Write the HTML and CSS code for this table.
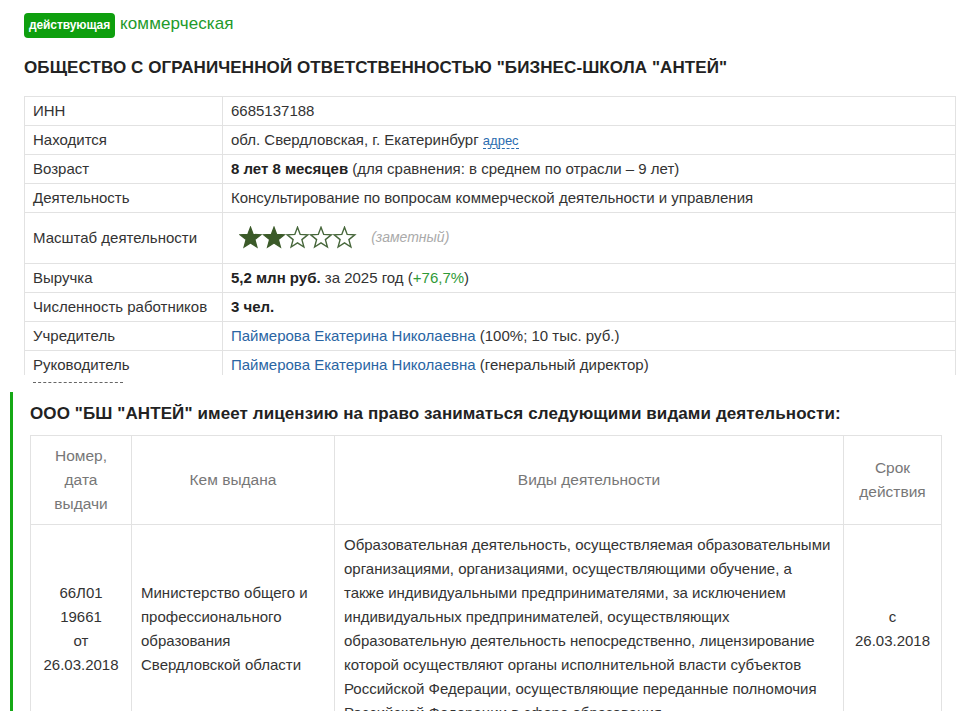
FILE: index.html
```html
<!DOCTYPE html>
<html lang="ru">
<head>
<meta charset="utf-8">
<link rel="stylesheet" href="styles.css">
</head>
<body>
<div class="page">
  <div class="company">
    <div class="status">
      <span class="badge">действующая</span>
      <span class="kind">коммерческая</span>
    </div>
    <h1 class="title">ОБЩЕСТВО С ОГРАНИЧЕННОЙ ОТВЕТСТВЕННОСТЬЮ "БИЗНЕС-ШКОЛА "АНТЕЙ"</h1>
    <table class="info">
      <tr><td class="lbl">ИНН</td><td>6685137188</td></tr>
      <tr><td class="lbl">Находится</td><td>обл. Свердловская, г. Екатеринбург <a class="addr">адрес</a></td></tr>
      <tr><td class="lbl">Возраст</td><td><b>8 лет 8 месяцев</b> (для сравнения: в среднем по отрасли – 9 лет)</td></tr>
      <tr><td class="lbl">Деятельность</td><td>Консультирование по вопросам коммерческой деятельности и управления</td></tr>
      <tr class="scale"><td class="lbl">Масштаб деятельности</td><td>
        <span class="stars">
          <svg width="120" height="23" viewBox="0 0 120 23">
            <defs>
              <path id="st" d="M11.5 1.3 L14.2 8.4 L21.8 8.8 L15.9 13.6 L17.9 21 L11.5 16.9 L5.1 21 L7.1 13.6 L1.2 8.8 L8.8 8.4 Z"/>
            </defs>
            <use href="#st" x="0" fill="#3b5a29" stroke="#3b5a29" stroke-width="1.3"/>
            <use href="#st" x="23.5" fill="#3b5a29" stroke="#3b5a29" stroke-width="1.3"/>
            <use href="#st" x="47" fill="#fff" stroke="#46663a" stroke-width="1.4"/>
            <use href="#st" x="70.5" fill="#fff" stroke="#46663a" stroke-width="1.4"/>
            <use href="#st" x="94" fill="#fff" stroke="#46663a" stroke-width="1.4"/>
          </svg>
        </span>
        <span class="note">(заметный)</span>
      </td></tr>
      <tr><td class="lbl">Выручка</td><td><b>5,2 млн руб.</b> за 2025 год (<span class="up">+76,7%</span>)</td></tr>
      <tr><td class="lbl">Численность работников</td><td><b>3 чел.</b></td></tr>
      <tr><td class="lbl">Учредитель</td><td><a class="person">Паймерова Екатерина Николаевна</a> (100%; 10 тыс. руб.)</td></tr>
      <tr class="last"><td class="lbl"><span class="dashed">Руководитель</span></td><td><a class="person">Паймерова Екатерина Николаевна</a> (генеральный директор)</td></tr>
    </table>
  </div>

  <section class="license">
    <h2 class="lic-title">ООО "БШ "АНТЕЙ" имеет лицензию на право заниматься следующими видами деятельности:</h2>
    <table class="lic">
      <colgroup>
        <col class="c1"><col class="c2"><col class="c3"><col class="c4">
      </colgroup>
      <tr class="head">
        <th>Номер,<br>дата<br>выдачи</th>
        <th>Кем выдана</th>
        <th>Виды деятельности</th>
        <th>Срок<br>действия</th>
      </tr>
      <tr>
        <td class="center">66Л01<br>19661<br>от<br>26.03.2018</td>
        <td>Министерство общего и профессионального образования Свердловской области</td>
        <td class="top">Образовательная деятельность, осуществляемая образовательными организациями, организациями, осуществляющими обучение, а также индивидуальными предпринимателями, за исключением индивидуальных предпринимателей, осуществляющих образовательную деятельность непосредственно, лицензирование которой осуществляют органы исполнительной власти субъектов Российской Федерации, осуществляющие переданные полномочия Российской Федерации в сфере образования.</td>
        <td class="center">с<br>26.03.2018</td>
      </tr>
    </table>
  </section>
</div>
</body>
</html>
```

FILE: styles.css
```css
html, body {
  margin: 0;
  padding: 0;
  background: #fff;
}
body {
  font-family: "Liberation Sans", Arial, sans-serif;
  color: #333;
  font-size: 15px;
}
.page {
  padding: 12px 10px 0 10px;
}
.company {
  padding-left: 14px;
  padding-right: 8px;
}
.status {
  display: flex;
  align-items: center;
  gap: 5px;
  height: 26px;
}
.badge {
  background: #0e9f0e;
  color: #fff;
  font-size: 12px;
  font-weight: bold;
  letter-spacing: -0.1px;
  border-radius: 4px;
  padding: 5px 5px;
  line-height: 15px;
}
.kind {
  color: #229a2a;
  font-size: 17px;
  letter-spacing: 0.1px;
  position: relative;
  top: -1px;
}
.title {
  font-size: 17px;
  font-weight: bold;
  color: #222;
  margin: 20px 0 18px 0;
  line-height: 20px;
  letter-spacing: 0.1px;
}
.info {
  border-collapse: collapse;
  width: 932px;
}
.info td {
  border: 1px solid #e2e2e2;
  padding: 0 8px;
  height: 28px;
  line-height: 20px;
  vertical-align: middle;
}
.info td.lbl {
  width: 181px;
}
.info tr.scale td {
  height: 50px;
}
.info tr.last td {
  border-bottom: none;
  height: 18px;
  vertical-align: top;
  padding-top: 4px;
  padding-bottom: 0;
}
.dashed {
  display: inline-block;
  line-height: 20px;
  border-bottom: 1px dashed #666;
  padding-bottom: 7px;
  margin-bottom: -8px;
  width: 90px;
  white-space: nowrap;
}
b {
  color: #222;
}
.addr {
  color: #2a6cb0;
  font-size: 13px;
  border-bottom: 1px dashed #2a6cb0;
  text-decoration: none;
}
.person {
  color: #2a65a3;
  text-decoration: none;
}
.up {
  color: #2f9a37;
}
.stars {
  display: inline-block;
  vertical-align: middle;
  margin-left: 8px;
  margin-right: 8px;
  position: relative;
  top: -1px;
}
.stars svg {
  display: block;
}
.note {
  color: #aaa;
  font-style: italic;
  font-size: 14px;
}
.license {
  margin-top: 17px;
  border-left: 3px solid #16a816;
  padding-left: 17px;
  padding-top: 11px;
  padding-bottom: 40px;
}
.lic-title {
  font-size: 17px;
  font-weight: bold;
  color: #222;
  margin: 0 0 10px 0;
  line-height: 22px;
  letter-spacing: 0.1px;
}
.lic {
  border-collapse: collapse;
  width: 912px;
  table-layout: fixed;
}
.lic col.c1 { width: 101px; }
.lic col.c2 { width: 203px; }
.lic col.c3 { width: 509px; }
.lic col.c4 { width: 98px; }
.lic th, .lic td {
  border: 1px solid #e2e2e2;
  line-height: 24px;
  padding: 8px 9px;
  font-size: 15px;
}
.lic th {
  color: #777;
  font-weight: normal;
  font-size: 15.5px;
  text-align: center;
  vertical-align: middle;
  height: 72px;
}
.lic td {
  vertical-align: middle;
  color: #333;
}
.lic td.center {
  text-align: center;
}
.lic td.top {
  vertical-align: top;
}
```
